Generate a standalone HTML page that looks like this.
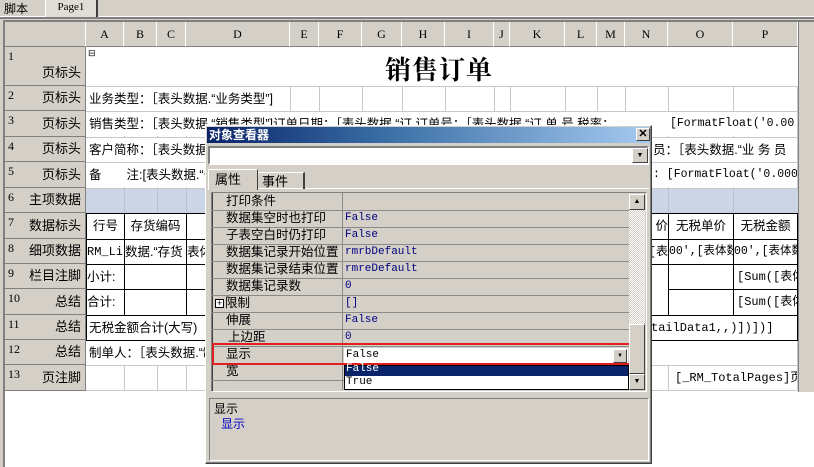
<!DOCTYPE html><html><head><meta charset="utf-8"><style>
*{margin:0;padding:0;box-sizing:border-box}
body{width:814px;height:467px;overflow:hidden;background:#d4d0c8;position:relative;font:12px "Liberation Sans","Noto Sans CJK SC","WenQuanYi Zen Hei",sans-serif;color:#000}
.a{position:absolute;white-space:nowrap;overflow:hidden}
.m{font-family:"Liberation Mono","Noto Sans CJK SC",monospace}
.hd{background:#d4d0c8;border-right:1px solid #fff;border-bottom:1px solid #808080;text-align:center;line-height:24px;font-family:"Liberation Serif",serif;font-size:12px}
.rl{background:#d4d0c8;border-bottom:1px solid #808080;border-right:1px solid #808080}
.rl i{position:absolute;left:3px;top:2px;font-style:normal;font-family:"Liberation Serif",serif;font-size:12px}
.rl b{position:absolute;right:4px;bottom:4px;font-weight:normal;font-size:13px}
.gv{background:#c8c8c8;width:1px}
.gh{background:#c8c8c8;height:1px}
.bk{border:1px solid #000;background:#fff}
.t{font-size:12.5px;line-height:24px;padding-left:2px;background:#fff}
.pn{font-size:12.5px;line-height:17px}
.pv{color:#000080;font-family:"Liberation Mono",monospace;font-size:11px;line-height:17px}
.pl{background:#8a8a8a;height:1px;left:212px;width:417px}
</style></head><body>
<!-- tabs -->
<div class="a" style="left:0;top:0;width:814px;height:17px;background:#d4d0c8;border-bottom:1px solid #fff"></div>
<div class="a" style="left:4px;top:2px;font-size:12px;line-height:14px">脚本</div>
<div class="a" style="left:45px;top:0;width:53px;height:18px;background:#e0ddd6;border-left:1px solid #fff;border-right:2px solid #404040;font-family:'Liberation Serif',serif;font-size:11px;text-align:center;line-height:14px">Page1</div>
<div class="a" style="left:0;top:17px;width:814px;height:2px;background:#808080"></div>
<!-- canvas -->
<div class="a" style="left:3px;top:20px;width:811px;height:447px;background:#fff;border-left:2px solid #808080;border-top:2px solid #808080"></div>
<div class="a" style="left:798px;top:22px;width:16px;height:370px;background:#d4d0c8;border-left:1px solid #808080"></div>
<!-- col header -->
<div class="a hd" style="left:5px;top:22px;width:81px;height:25px"></div>
<div class="a hd" style="left:86px;top:22px;width:38px;height:25px">A</div>
<div class="a hd" style="left:124px;top:22px;width:33px;height:25px">B</div>
<div class="a hd" style="left:157px;top:22px;width:29px;height:25px">C</div>
<div class="a hd" style="left:186px;top:22px;width:104px;height:25px">D</div>
<div class="a hd" style="left:290px;top:22px;width:29px;height:25px">E</div>
<div class="a hd" style="left:319px;top:22px;width:43px;height:25px">F</div>
<div class="a hd" style="left:362px;top:22px;width:40px;height:25px">G</div>
<div class="a hd" style="left:402px;top:22px;width:43px;height:25px">H</div>
<div class="a hd" style="left:445px;top:22px;width:49px;height:25px">I</div>
<div class="a hd" style="left:494px;top:22px;width:16px;height:25px">J</div>
<div class="a hd" style="left:510px;top:22px;width:55px;height:25px">K</div>
<div class="a hd" style="left:565px;top:22px;width:32px;height:25px">L</div>
<div class="a hd" style="left:597px;top:22px;width:28px;height:25px">M</div>
<div class="a hd" style="left:625px;top:22px;width:43px;height:25px">N</div>
<div class="a hd" style="left:668px;top:22px;width:65px;height:25px">O</div>
<div class="a hd" style="left:733px;top:22px;width:65px;height:25px">P</div>
<!-- row labels -->
<div class="a rl" style="left:5px;top:47px;width:81px;height:39px"><i>1</i><b>页标头</b></div>
<div class="a rl" style="left:5px;top:86px;width:81px;height:25px"><i>2</i><b>页标头</b></div>
<div class="a rl" style="left:5px;top:111px;width:81px;height:26px"><i>3</i><b>页标头</b></div>
<div class="a rl" style="left:5px;top:137px;width:81px;height:25px"><i>4</i><b>页标头</b></div>
<div class="a rl" style="left:5px;top:162px;width:81px;height:26px"><i>5</i><b>页标头</b></div>
<div class="a rl" style="left:5px;top:188px;width:81px;height:25px"><i>6</i><b>主项数据</b></div>
<div class="a rl" style="left:5px;top:213px;width:81px;height:26px"><i>7</i><b>数据标头</b></div>
<div class="a rl" style="left:5px;top:239px;width:81px;height:25px"><i>8</i><b>细项数据</b></div>
<div class="a rl" style="left:5px;top:264px;width:81px;height:25px"><i>9</i><b>栏目注脚</b></div>
<div class="a rl" style="left:5px;top:289px;width:81px;height:26px"><i>10</i><b>总结</b></div>
<div class="a rl" style="left:5px;top:315px;width:81px;height:25px"><i>11</i><b>总结</b></div>
<div class="a rl" style="left:5px;top:340px;width:81px;height:25px"><i>12</i><b>总结</b></div>
<div class="a rl" style="left:5px;top:365px;width:81px;height:26px"><i>13</i><b>页注脚</b></div>
<!-- grid lines rows 2-13 -->
<div class="a gv" style="left:124px;top:86px;height:305px"></div>
<div class="a gv" style="left:157px;top:86px;height:305px"></div>
<div class="a gv" style="left:186px;top:86px;height:305px"></div>
<div class="a gv" style="left:290px;top:86px;height:305px"></div>
<div class="a gv" style="left:319px;top:86px;height:305px"></div>
<div class="a gv" style="left:362px;top:86px;height:305px"></div>
<div class="a gv" style="left:402px;top:86px;height:305px"></div>
<div class="a gv" style="left:445px;top:86px;height:305px"></div>
<div class="a gv" style="left:494px;top:86px;height:305px"></div>
<div class="a gv" style="left:510px;top:86px;height:305px"></div>
<div class="a gv" style="left:565px;top:86px;height:305px"></div>
<div class="a gv" style="left:597px;top:86px;height:305px"></div>
<div class="a gv" style="left:625px;top:86px;height:305px"></div>
<div class="a gv" style="left:668px;top:86px;height:305px"></div>
<div class="a gv" style="left:733px;top:86px;height:305px"></div>
<div class="a gv" style="left:797px;top:86px;height:305px"></div>
<div class="a gh" style="left:86px;top:86px;width:712px"></div>
<div class="a gh" style="left:86px;top:111px;width:712px"></div>
<div class="a gh" style="left:86px;top:137px;width:712px"></div>
<div class="a gh" style="left:86px;top:162px;width:712px"></div>
<div class="a gh" style="left:86px;top:188px;width:712px"></div>
<div class="a gh" style="left:86px;top:365px;width:712px"></div>
<div class="a gh" style="left:86px;top:390px;width:712px"></div>
<!-- row1 -->
<div class="a" style="left:87px;top:47px;width:710px;height:39px;background:#fff"></div>
<div class="a" style="left:88px;top:48px;font-size:9px">⊟</div>
<div class="a" style="left:385px;top:50px;font-size:26px;font-weight:bold;font-family:'Noto Serif CJK SC','Noto Sans CJK SC',serif;letter-spacing:1px">销售订单</div>
<!-- row2-5 texts -->
<div class="a t" style="left:87px;top:87px;width:203px;height:24px">业务类型：［表头数据.“业务类型”]</div>
<div class="a t" style="left:87px;top:112px;width:580px;height:24px">销售类型：［表头数据.“销售类型”]订单日期：［表头数据.“订 订单号：［表头数据.“订 单 号 税率：</div>
<div class="a t m" style="left:668px;top:112px;width:129px;height:24px;font-size:11.5px">[FormatFloat('0.00'</div>
<div class="a t" style="left:87px;top:138px;width:200px;height:24px">客户简称：［表头数据.“客户简称”]</div>
<div class="a t" style="left:651px;top:138px;width:146px;height:24px">员：［表头数据.“业 务 员</div>
<div class="a t" style="left:87px;top:163px;width:200px;height:24px">备　　注:[表头数据.“备注”]</div>
<div class="a t m" style="left:651px;top:163px;width:146px;height:24px;font-size:11.5px">: [FormatFloat('0.000</div>
<!-- row6 -->
<div class="a" style="left:86px;top:189px;width:712px;height:24px;background:#ccd5e6"></div>
<div class="a gv" style="left:124px;top:189px;height:24px;background:#b8c2d4"></div>
<div class="a gv" style="left:157px;top:189px;height:24px;background:#b8c2d4"></div>
<div class="a gv" style="left:186px;top:189px;height:24px;background:#b8c2d4"></div>
<div class="a gv" style="left:668px;top:189px;height:24px;background:#b8c2d4"></div>
<div class="a gv" style="left:733px;top:189px;height:24px;background:#b8c2d4"></div>
<!-- row7-10 black cells -->
<div class="a bk t" style="left:86px;top:213px;width:39px;height:27px;text-align:center;padding:0">行号</div>
<div class="a bk t" style="left:124px;top:213px;width:63px;height:27px;text-align:center;padding:0">存货编码</div>
<div class="a bk" style="left:186px;top:213px;width:30px;height:27px"></div>
<div class="a bk t" style="left:640px;top:213px;width:29px;height:27px;padding:0;text-align:right">价</div>
<div class="a bk t" style="left:668px;top:213px;width:66px;height:27px;text-align:center;padding:0">无税单价</div>
<div class="a bk t" style="left:733px;top:213px;width:65px;height:27px;text-align:center;padding:0">无税金额</div>
<div class="a bk t m" style="left:86px;top:239px;width:39px;height:26px;padding:0;font-size:12px">RM_Li</div>
<div class="a bk t" style="left:124px;top:239px;width:63px;height:26px;padding:0">数据.“存货</div>
<div class="a bk t" style="left:186px;top:239px;width:30px;height:26px;padding:0">表体</div>
<div class="a bk t m" style="left:640px;top:239px;width:29px;height:26px;padding:0;font-size:12px;text-align:right">[表</div>
<div class="a bk t m" style="left:668px;top:239px;width:66px;height:26px;padding:0;font-size:11.5px">00',[表体数</div>
<div class="a bk t m" style="left:733px;top:239px;width:65px;height:26px;padding:0;font-size:11.5px">00',[表体数</div>
<div class="a bk t" style="left:86px;top:264px;width:39px;height:26px;padding:0">小计:</div>
<div class="a bk" style="left:124px;top:264px;width:63px;height:26px"></div>
<div class="a bk" style="left:186px;top:264px;width:30px;height:26px"></div>
<div class="a bk" style="left:668px;top:264px;width:66px;height:26px"></div>
<div class="a bk t m" style="left:733px;top:264px;width:65px;height:26px;padding:0 0 0 3px;font-size:12px">[Sum([表体</div>
<div class="a bk t" style="left:86px;top:289px;width:39px;height:27px;padding:0">合计:</div>
<div class="a bk" style="left:124px;top:289px;width:63px;height:27px"></div>
<div class="a bk" style="left:186px;top:289px;width:30px;height:27px"></div>
<div class="a bk" style="left:668px;top:289px;width:66px;height:27px"></div>
<div class="a bk t m" style="left:733px;top:289px;width:65px;height:27px;padding:0 0 0 3px;font-size:12px">[Sum([表体</div>
<div class="a bk t" style="left:86px;top:315px;width:712px;height:26px">无税金额合计(大写)</div>
<div class="a t m" style="left:651px;top:316px;width:146px;height:24px;font-size:12px;padding:0">tailData1,,)])])]</div>
<div class="a t" style="left:87px;top:341px;width:710px;height:24px">制单人：［表头数据.“制单人”]</div>
<div class="a t m" style="left:669px;top:366px;width:128px;height:24px;font-size:12px;padding-left:6px">[_RM_TotalPages]页</div>
<!-- dialog -->
<div class="a" style="left:205px;top:125px;width:447px;height:339px;background:#d4d0c8;border:1px solid #fff;border-right-color:#404040;border-bottom-color:#404040;box-shadow:inset -1px -1px #808080"></div>
<div class="a" style="left:207px;top:127px;width:443px;height:16px;background:linear-gradient(90deg,#0a246a,#3a6ea5 40%,#a6caf0)"></div>
<div class="a" style="left:209px;top:127px;color:#fff;font-weight:bold;font-size:12px;line-height:16px">对象查看器</div>
<div class="a" style="left:636px;top:128px;width:14px;height:13px;background:#d4d0c8;border:1px solid #fff;border-right-color:#404040;border-bottom-color:#404040;font-size:11px;line-height:10px;text-align:center;font-weight:bold">✕</div>
<div class="a" style="left:208px;top:146px;width:441px;height:19px;background:#fff;border:2px solid #808080;border-right-color:#fff;border-bottom-color:#fff"></div>
<div class="a" style="left:632px;top:148px;width:16px;height:15px;background:#d4d0c8;border:1px solid #fff;border-right-color:#404040;border-bottom-color:#404040;font-size:7px;text-align:center;line-height:13px">▼</div>
<div class="a" style="left:208px;top:188px;width:441px;height:1px;background:#fff"></div>
<div class="a" style="left:208px;top:169px;width:50px;height:21px;background:#d4d0c8;border:1px solid #fff;border-bottom:none;border-right:1px solid #404040;font-size:13px;line-height:19px;padding-left:6px">属性</div>
<div class="a" style="left:258px;top:172px;width:47px;height:17px;border-top:1px solid #fff;border-right:2px solid #404040;font-size:13px;line-height:17px;padding-left:4px">事件</div>
<!-- prop grid -->
<div class="a" style="left:211px;top:192px;width:436px;height:200px;border:1px solid #808080;border-right-color:#fff;border-bottom-color:#fff;background:#d4d0c8"></div>
<div class="a" style="left:212px;top:193px;width:1px;height:198px;background:#404040"></div>
<div class="a" style="left:342px;top:193px;width:1px;height:197px;background:#8a8a8a"></div>
<div class="a pl" style="top:210px"></div><div class="a pl" style="top:227px"></div><div class="a pl" style="top:244px"></div><div class="a pl" style="top:261px"></div><div class="a pl" style="top:278px"></div><div class="a pl" style="top:295px"></div><div class="a pl" style="top:312px"></div><div class="a pl" style="top:329px"></div><div class="a pl" style="top:346px"></div><div class="a pl" style="top:380px"></div>
<div class="a pn" style="left:226px;top:193px">打印条件</div>
<div class="a pn" style="left:226px;top:210px">数据集空时也打印</div><div class="a pv" style="left:345px;top:210px">False</div>
<div class="a pn" style="left:226px;top:227px">子表空白时仍打印</div><div class="a pv" style="left:345px;top:227px">False</div>
<div class="a pn" style="left:226px;top:244px">数据集记录开始位置</div><div class="a pv" style="left:345px;top:244px">rmrbDefault</div>
<div class="a pn" style="left:226px;top:261px">数据集记录结束位置</div><div class="a pv" style="left:345px;top:261px">rmreDefault</div>
<div class="a pn" style="left:226px;top:278px">数据集记录数</div><div class="a pv" style="left:345px;top:278px">0</div>
<div class="a" style="left:215px;top:299px;width:9px;height:9px;border:1px solid #000;font-size:9px;line-height:7px;text-align:center;background:#fff">+</div>
<div class="a pn" style="left:225px;top:295px">限制</div><div class="a pv" style="left:345px;top:295px">[]</div>
<div class="a pn" style="left:226px;top:312px">伸展</div><div class="a pv" style="left:345px;top:312px">False</div>
<div class="a pn" style="left:228px;top:329px">上边距</div><div class="a pv" style="left:345px;top:329px">0</div>
<div class="a pn" style="left:226px;top:346px">显示</div>
<div class="a" style="left:344px;top:348px;width:284px;height:16px;background:#fff"></div>
<div class="a pv" style="left:346px;top:347px;color:#000;font-weight:normal;font-family:'Liberation Mono',monospace">False</div>
<div class="a" style="left:613px;top:349px;width:14px;height:14px;background:#d4d0c8;border:1px solid #fff;border-right-color:#404040;border-bottom-color:#404040;font-size:6px;text-align:center;line-height:12px">▼</div>
<div class="a pn" style="left:226px;top:363px">宽</div>
<div class="a" style="left:212px;top:343px;width:424px;height:22px;border:2px solid #e02020"></div>
<div class="a" style="left:344px;top:365px;width:285px;height:25px;background:#fff;border:1px solid #000"></div>
<div class="a" style="left:345px;top:366px;width:283px;height:10px;background:#0a246a"></div>
<div class="a m" style="left:346px;top:362px;font-size:11px;color:#fff;line-height:14px">False</div>
<div class="a m" style="left:346px;top:376px;font-size:11px;line-height:12px">True</div>
<!-- scrollbar -->
<div class="a" style="left:629px;top:194px;width:16px;height:196px;background:repeating-conic-gradient(#fff 0 25%,#d4d0c8 0 50%) 0 0/2px 2px"></div>
<div class="a" style="left:629px;top:194px;width:16px;height:16px;background:#d4d0c8;border:1px solid #fff;border-right-color:#404040;border-bottom-color:#404040;font-size:7px;text-align:center;line-height:14px">▲</div>
<div class="a" style="left:629px;top:324px;width:16px;height:50px;background:#d4d0c8;border:1px solid #fff;border-right-color:#404040;border-bottom-color:#404040"></div>
<div class="a" style="left:629px;top:374px;width:16px;height:16px;background:#d4d0c8;border:1px solid #fff;border-right-color:#404040;border-bottom-color:#404040;font-size:7px;text-align:center;line-height:14px">▼</div>
<!-- description -->
<div class="a" style="left:209px;top:398px;width:440px;height:63px;border:1px solid #808080;border-right-color:#fff;border-bottom-color:#fff"></div>
<div class="a" style="left:214px;top:400px;font-size:12px">显示</div>
<div class="a" style="left:221px;top:415px;font-size:12px;color:#0000c0">显示</div>
</body></html>
